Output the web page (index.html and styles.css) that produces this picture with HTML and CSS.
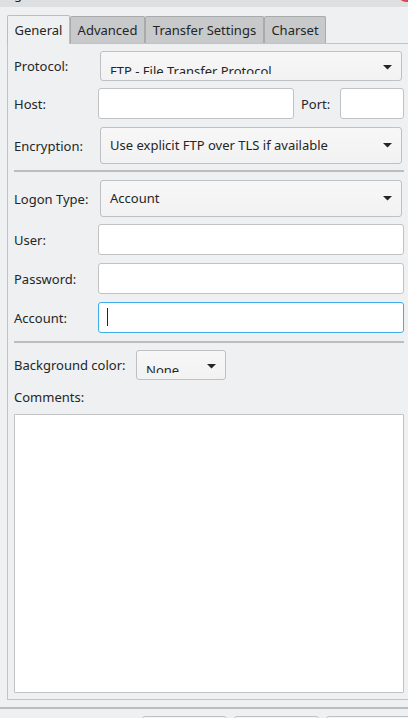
FILE: index.html
```html
<!DOCTYPE html>
<html>
<head>
<meta charset="utf-8">
<link rel="stylesheet" href="styles.css">
</head>
<body>
<div class="titlebar">
  <span class="title-frag">g</span>
  <span class="close-btn"></span>
</div>
<div class="tabs">
  <div class="tab active w-general">General</div>
  <div class="tab w-advanced">Advanced</div>
  <div class="tab w-transfer">Transfer Settings</div>
  <div class="tab w-charset">Charset</div>
</div>
<div class="panel">
  <div class="row h30">
    <div class="lbl">Protocol:</div>
    <div class="combo clipped grow">
      <div class="clip">FTP - File Transfer Protocol</div>
      <svg class="arrow" width="9" height="5" viewBox="0 0 9 5"><path d="M0 0H9L4.5 4.6Z"/></svg>
    </div>
  </div>
  <div class="row h31 mt7">
    <div class="lbl">Host:</div>
    <div class="input grow"></div>
    <div class="lbl-port">Port:</div>
    <div class="input port"></div>
  </div>
  <div class="row h37 mt8">
    <div class="lbl">Encryption:</div>
    <div class="combo grow">
      <span class="val">Use explicit FTP over TLS if available</span>
      <svg class="arrow" width="9" height="5" viewBox="0 0 9 5"><path d="M0 0H9L4.5 4.6Z"/></svg>
    </div>
  </div>
  <div class="sep mt6"></div>
  <div class="row h37 mt8">
    <div class="lbl">Logon Type:</div>
    <div class="combo grow">
      <span class="val">Account</span>
      <svg class="arrow" width="9" height="5" viewBox="0 0 9 5"><path d="M0 0H9L4.5 4.6Z"/></svg>
    </div>
  </div>
  <div class="row h31 mt7">
    <div class="lbl">User:</div>
    <div class="input grow"></div>
  </div>
  <div class="row h31 mt8">
    <div class="lbl">Password:</div>
    <div class="input grow"></div>
  </div>
  <div class="row h31 mt8">
    <div class="lbl">Account:</div>
    <div class="input grow focused"><span class="caret"></span></div>
  </div>
  <div class="sep mt8"></div>
  <div class="row h30 mt7">
    <div class="lbl-bg">Background color:</div>
    <div class="combo clipped color-combo">
      <div class="clip">None</div>
      <svg class="arrow" width="9" height="5" viewBox="0 0 9 5"><path d="M0 0H9L4.5 4.6Z"/></svg>
    </div>
  </div>
  <div class="comments-lbl">Comments:</div>
  <div class="comments"></div>
</div>
<div class="footer-sep"></div>
<div class="buttons">
  <div class="btn"></div>
  <div class="btn"></div>
  <div class="btn"></div>
</div>
</body>
</html>
```
FILE: styles.css
```css
html, body {
  margin: 0;
  padding: 0;
}
body {
  width: 408px;
  height: 718px;
  overflow: hidden;
  background: #eff0f1;
  font-family: "Noto Sans", "DejaVu Sans", sans-serif;
  font-size: 13px;
  color: #232627;
}
.titlebar {
  height: 7px;
  background: #dedfe0;
  display: flex;
  justify-content: space-between;
  align-items: flex-start;
  overflow: hidden;
}
.title-frag {
  font-size: 13px;
  line-height: 13px;
  margin-top: -12px;
  margin-left: 14px;
  color: #232627;
}
.close-btn {
  width: 19px;
  height: 19px;
  border-radius: 50%;
  background: #da4453;
  margin-top: -17px;
  margin-right: -8px;
}
.tabs {
  display: flex;
  align-items: flex-end;
  height: 28px;
  margin-top: 8px;
  padding-left: 7px;
}
.tab {
  box-sizing: border-box;
  height: 27px;
  border: 1px solid #a9aaab;
  border-bottom: none;
  border-radius: 2px 2px 0 0;
  background: #c8c9ca;
  display: flex;
  align-items: center;
  justify-content: center;
  white-space: nowrap;
  padding-bottom: 1px;
}
.tab.active {
  height: 29px;
  margin-bottom: -1px;
  background: #eff0f1;
  border-color: #bcbdbe;
  position: relative;
  z-index: 1;
}
.w-general { width: 63px; }
.w-advanced { width: 75px; }
.w-transfer { width: 119px; }
.w-charset { width: 62px; }

.panel {
  box-sizing: border-box;
  margin-left: 7px;
  width: 404px;
  border: 1px solid #c2c3c4;
  padding: 7px 6px 6px 6px;
}
.row {
  display: flex;
  align-items: center;
}
.h30 { height: 30px; }
.h31 { height: 31px; }
.h37 { height: 37px; }
.mt6 { margin-top: 6px; }
.mt7 { margin-top: 7px; }
.mt8 { margin-top: 8px; }
.lbl {
  width: 84px;
  flex: none;
  white-space: nowrap;
}
.grow { flex: 1; }
.combo {
  box-sizing: border-box;
  align-self: stretch;
  margin: 0 2px;
  border: 1px solid #bfc0c1;
  border-radius: 3px;
  background: linear-gradient(#f7f7f7, #f2f2f2);
  display: flex;
  align-items: center;
  padding: 0 9px;
  overflow: hidden;
}
.combo .val {
  white-space: nowrap;
  padding-bottom: 1px;
}
.combo .arrow {
  flex: none;
  margin-left: auto;
  fill: #232627;
}
.combo.clipped {
  align-items: flex-start;
  padding-top: 2px;
}
.combo.clipped .arrow {
  align-self: center;
}
.clip {
  box-sizing: border-box;
  height: 20px;
  overflow: hidden;
  padding-top: 8px;
  line-height: 18px;
  white-space: nowrap;
}
.input {
  box-sizing: border-box;
  align-self: stretch;
  background: #ffffff;
  border: 1px solid #c1c2c3;
  border-radius: 3px;
  display: flex;
  align-items: center;
}
.input.focused {
  border-color: #3daee9;
}
.caret {
  width: 1px;
  height: 18px;
  background: #232627;
  margin-left: 8px;
  margin-top: -2px;
}
.lbl-port {
  width: 31px;
  flex: none;
  margin: 0 8px 0 7px;
  white-space: nowrap;
}
.port {
  width: 64px;
  flex: none;
}
.sep {
  height: 2px;
  background: #bcbdbe;
}
.lbl-bg {
  white-space: nowrap;
  width: 122px;
  flex: none;
}
.color-combo {
  width: 90px;
  margin: 0;
  flex: none;
}
.comments-lbl {
  margin-top: 8px;
  line-height: 18px;
}
.comments {
  box-sizing: border-box;
  margin-top: 8px;
  height: 279px;
  background: #ffffff;
  border: 1px solid #c2c3c4;
  border-radius: 1px;
}
.footer-sep {
  margin-top: 7px;
  height: 2px;
  background: #bcbdbe;
}
.buttons {
  display: flex;
  gap: 7px;
  margin-top: 7px;
  padding-left: 142px;
}
.btn {
  box-sizing: border-box;
  flex: none;
  width: 85px;
  height: 30px;
  border: 1px solid #bfc0c1;
  border-radius: 3px;
  background: #f5f5f5;
}
```
